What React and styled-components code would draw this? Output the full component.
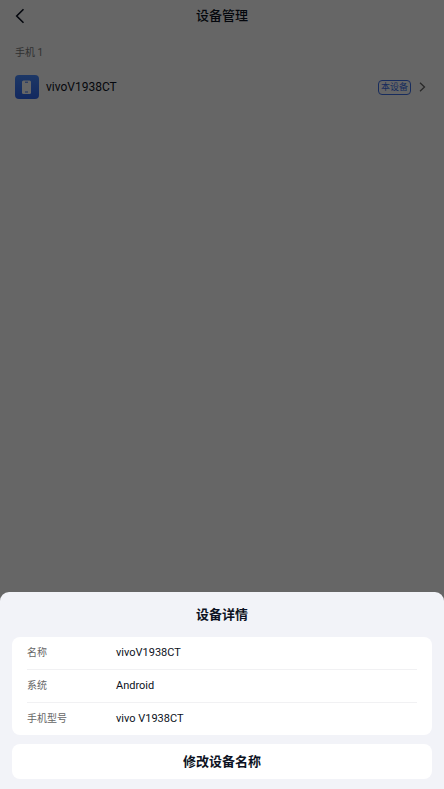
import React from "react";
import styled, { createGlobalStyle } from "styled-components";

const GlobalStyle = createGlobalStyle`
  * {
    box-sizing: border-box;
  }

  body {
    margin: 0;
    background: white;
    color: #0c1222;
    font-family: Roboto, "Noto Sans CJK SC", sans-serif;
  }

  button {
    border: none;
    padding: 0;
    background: transparent;
    color: inherit;
    font-family: inherit;
    cursor: pointer;
  }
`;

const Page = styled.div`
  min-height: 100vh;
`;

const Header = styled.header`
  display: grid;
  grid-template-columns: 40px 1fr 40px;
  align-items: center;
  height: 32px;
`;

const BackButton = styled.button`
  display: flex;
  align-items: center;
  justify-content: center;
  height: 32px;
`;

const Title = styled.h1`
  margin: 0;
  font-size: 13px;
  line-height: 30px;
  font-weight: 500;
  text-align: center;
`;

const GroupLabel = styled.h2`
  margin: 0;
  padding: 10px 15px 8px;
  color: #7a7a7a;
  font-size: 10px;
  line-height: 22px;
  font-weight: 400;
`;

const DeviceRow = styled.button`
  display: flex;
  align-items: center;
  gap: 7px;
  width: 100%;
  height: 30px;
  padding: 0 18px 0 15px;
`;

const DeviceName = styled.span`
  flex: 1;
  font-size: 12px;
  line-height: 16px;
  text-align: left;
`;

const Tag = styled.span`
  padding: 0 2px;
  border: 1px solid #3a6ee8;
  border-radius: 4px;
  color: #3a6ee8;
  font-size: 9px;
  line-height: 13px;
`;

const Scrim = styled.div`
  position: fixed;
  inset: 0;
  display: flex;
  flex-direction: column;
  justify-content: flex-end;
  background: rgba(0, 0, 0, 0.6);
`;

const Sheet = styled.section`
  padding: 0 12px 10px;
  border-radius: 9px 9px 0 0;
  background: #f2f3f8;
`;

const SheetTitle = styled.h2`
  margin: 0;
  font-size: 13px;
  line-height: 45px;
  font-weight: 700;
  text-align: center;
`;

const Details = styled.dl`
  margin: 0 0 9px;
  padding: 0 15px;
  border-radius: 8px;
  background: white;
`;

const DetailRow = styled.div`
  display: flex;
  align-items: center;
  min-height: 32px;

  & + & {
    min-height: 33px;
    border-top: 1px solid #f1f1f3;
  }
`;

const DetailLabel = styled.dt`
  width: 89px;
  color: #666;
  font-size: 10px;
  line-height: 16px;
`;

const DetailValue = styled.dd`
  margin: 0;
  font-size: 11px;
  line-height: 16px;
`;

const RenameButton = styled.button`
  display: block;
  width: 100%;
  border-radius: 8px;
  background: white;
  font-size: 13px;
  line-height: 35px;
  font-weight: 700;
`;

const details = [
  { label: "名称", value: "vivoV1938CT" },
  { label: "系统", value: "Android" },
  { label: "手机型号", value: "vivo V1938CT" },
];

const BackIcon = () => (
  <svg width="10" height="16" viewBox="0 0 10 16" fill="none" aria-hidden="true">
    <path d="M8.500 1.200 1.700 8l6.800 6.800" stroke="#0c1222" strokeWidth="1.600" />
  </svg>
);

const PhoneIcon = () => (
  <svg width="24" height="24" viewBox="0 0 24 24" aria-hidden="true">
    <defs>
      <linearGradient id="phone" x1="0" y1="0" x2="0" y2="1">
        <stop offset="0" stopColor="#4a8cff" />
        <stop offset="1" stopColor="#2e66ee" />
      </linearGradient>
    </defs>
    <rect width="24" height="24" rx="4" fill="url(#phone)" />
    <rect x="7" y="5.500" width="9" height="13.500" rx="1.500" fill="white" />
    <path d="M10 7.200h3M10 17h3" stroke="#3a75f5" strokeWidth="1" />
  </svg>
);

const ChevronIcon = () => (
  <svg width="8" height="10" viewBox="0 0 8 10" fill="none" aria-hidden="true">
    <path d="m2 .8 4.500 4.200L2 9.200" stroke="#666" strokeWidth="1.300" />
  </svg>
);

const App = () => {
  return (
    <>
      <GlobalStyle />
      <Page>
        <Header>
          <BackButton aria-label="返回">
            <BackIcon />
          </BackButton>
          <Title>设备管理</Title>
        </Header>
        <GroupLabel>手机 1</GroupLabel>
        <DeviceRow>
          <PhoneIcon />
          <DeviceName>vivoV1938CT</DeviceName>
          <Tag>本设备</Tag>
          <ChevronIcon />
        </DeviceRow>
      </Page>
      <Scrim>
        <Sheet role="dialog" aria-labelledby="sheet-title">
          <SheetTitle id="sheet-title">设备详情</SheetTitle>
          <Details>
            {details.map(({ label, value }) => (
              <DetailRow key={label}>
                <DetailLabel>{label}</DetailLabel>
                <DetailValue>{value}</DetailValue>
              </DetailRow>
            ))}
          </Details>
          <RenameButton>修改设备名称</RenameButton>
        </Sheet>
      </Scrim>
    </>
  );
};

export default App;
